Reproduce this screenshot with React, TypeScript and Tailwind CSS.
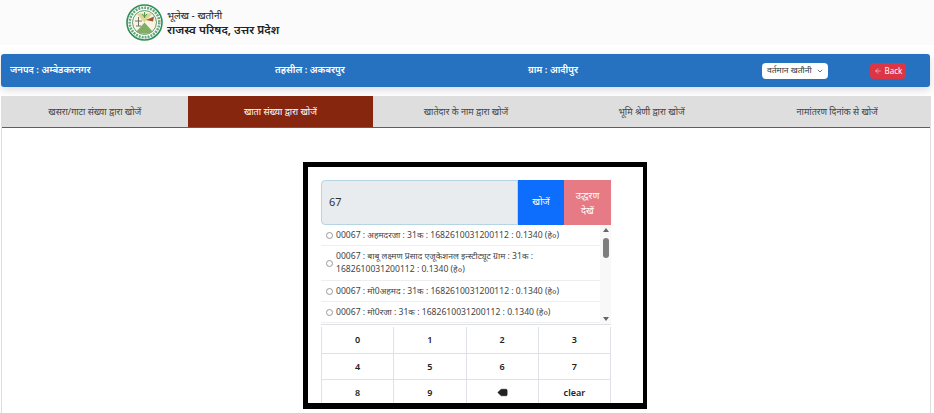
import { ArrowLeft, ChevronDown, Delete } from "lucide-react";

const font = { fontFamily: '"Noto Sans", "Open Sans", sans-serif' };

const tabs = [
  "खसरा/गाटा संख्या द्वारा खोजें",
  "खाता संख्या द्वारा खोजें",
  "खातेदार के नाम द्वारा खोजें",
  "भूमि श्रेणी द्वारा खोजें",
  "नामांतरण दिनांक से खोजें",
];

const results = [
  "00067 : अहमदरजा : 31क : 1682610031200112 : 0.1340 (हे०)",
  "00067 : बाबू लक्ष्मण प्रसाद एजूकेशनल इन्स्टीट्यूट ग्राम : 31क : 1682610031200112 : 0.1340 (हे०)",
  "00067 : मो0अहमद : 31क : 1682610031200112 : 0.1340 (हे०)",
  "00067 : मो0रजा : 31क : 1682610031200112 : 0.1340 (हे०)",
];

function Logo() {
  return (
    <svg width="37" height="37" viewBox="0 0 37 37">
      <circle cx="18.5" cy="18.5" r="17.5" fill="#fff" stroke="#2f8f57" strokeWidth="1.6" />
      <circle cx="18.5" cy="18.5" r="14.8" fill="none" stroke="#6aa87c" strokeWidth="2.6" strokeDasharray="2 1" />
      <circle cx="18.5" cy="18.5" r="12" fill="#f6f4e2" stroke="#3c7f52" strokeWidth="0.8" />
      <path d="M10.5 9.5 H26.5 L18.5 18.5 Z" fill="#dcd88e" />
      <path d="M10 28 Q18.5 31.5 27 28 L18.5 18.5 Z" fill="#7fae62" />
      <path d="M20 16 L28 12.5 L27 17.5 Z" fill="#a5532c" />
      <path d="M9 17 H16 M12.5 13 V22 M10 22 H15" stroke="#555" strokeWidth="0.8" />
      <path d="M18.5 8 V14 M16 10 L18.5 13 L21 10" stroke="#4d8f4f" strokeWidth="0.9" fill="none" />
    </svg>
  );
}

export default function App() {
  return (
    <div className="h-[413px] w-[934px] overflow-hidden bg-white" style={font}>
      {/* HEADER */}
      <div className="flex h-[45px] items-center gap-[4px] bg-[#fbfbfb] pl-[126px]">
        <Logo />
        <div className="text-[#222]">
          <div className="text-[10px] leading-[13px]">भूलेख - खतौनी</div>
          <div className="text-[11.7px] leading-[14px] font-semibold">राजस्व परिषद, उत्तर प्रदेश</div>
        </div>
      </div>

      {/* INFO BAR */}
      <div className="mx-px mt-[9px] grid h-[33px] w-[929px] grid-cols-[200px_260px_228px_1fr] items-center rounded-[3px] bg-[#2772c0] text-[9.5px] font-semibold text-white shadow-[0_3px_8px_rgba(0,0,0,0.15)]">
        <div className="pl-[9px]">जनपद : अम्बेडकरनगर</div>
        <div className="pl-[74px]">तहसील : अकबरपुर</div>
        <div className="pl-[67px]">ग्राम : आदीपुर</div>
        <div className="flex items-center pl-[73px]">
          <div className="flex h-4 w-[66px] items-center justify-between rounded-sm bg-white pr-[4px] pl-[5px] text-[8.5px] font-normal whitespace-nowrap text-[#333]">
            वर्तमान खतौनी
            <ChevronDown size={8} strokeWidth={2} />
          </div>
          <div className="ml-[42px] flex h-4 w-9 items-center justify-center gap-[3px] rounded-sm bg-[#dc3545] text-[8px] font-normal text-white">
            <ArrowLeft size={8} strokeWidth={1.5} />
            Back
          </div>
        </div>
      </div>

      {/* TABS */}
      <div className="mx-px mt-[9px] h-[400px] w-[930px] border-x border-[#dedede]">
        <div className="grid h-[32px] grid-cols-5 border-b border-[#a0452e] bg-[#dedede] text-[9px] text-[#444]">
          {tabs.map((t, i) => (
            <div
              key={t}
              className={
                i === 1
                  ? "flex items-center justify-center bg-[#86260f] text-white"
                  : "flex items-center justify-center"
              }
            >
              {t}
            </div>
          ))}
        </div>

        {/* SEARCH BOX */}
        <div className="mt-[34px] ml-[301px] h-[247px] w-[344px] overflow-hidden border-t-[5px] border-r-[4px] border-b-[6px] border-l-[5px] border-black bg-white pt-[13px] pl-[13px]">
          <div className="w-[290px]">
            <div className="flex h-[45px]">
              <div className="flex flex-1 items-center rounded-l-sm border border-[#b5d5e5] bg-[#e9ecef] pl-[7px] text-[11px] text-[#333]">
                67
              </div>
              <div className="flex w-[46px] items-center justify-center bg-[#0d6efd] text-[9.5px] text-white">
                खोजें
              </div>
              <div className="flex w-[47px] items-center justify-center bg-[#e67a85] text-center text-[9.5px] leading-[15px] text-white">
                उद्धरण
                <br />
                देखें
              </div>
            </div>

            {/* RESULT LIST */}
            <div className="relative h-[100px] overflow-hidden border-b border-[#dee2e6]">
              <div className="w-[279px] text-[8.6px] text-[#444]">
                {results.map((r, i) => (
                  <div
                    key={r}
                    className={
                      i === 1
                        ? "flex h-[35px] items-center gap-[3px] border-b border-[#eeeeee] pl-[5px]"
                        : "flex h-[21px] items-center gap-[3px] border-b border-[#eeeeee] pl-[5px]"
                    }
                  >
                    <span className="h-[7px] w-[7px] shrink-0 rounded-full border border-[#999]" />
                    <span className="leading-[13px]">{r}</span>
                  </div>
                ))}
              </div>
              <div className="absolute top-0 right-0 flex h-full w-[11px] flex-col items-center justify-between bg-[#f8f8f8] py-[3px]">
                <span className="h-0 w-0 border-x-[3px] border-b-[4px] border-x-transparent border-b-[#666]" />
                <span className="absolute top-[13px] h-5 w-[6px] rounded-full bg-[#7d7d7d]" />
                <span className="h-0 w-0 border-x-[3px] border-t-[4px] border-x-transparent border-t-[#666]" />
              </div>
            </div>

            {/* KEYPAD */}
            <div className="mt-[2px] grid grid-cols-4 border-l border-[#dee2e6] text-[9px] font-semibold text-[#222]">
              {["0", "1", "2", "3", "4", "5", "6", "7", "8", "9", "del", "clear"].map((k) => (
                <div
                  key={k}
                  className="flex h-[26.5px] items-center justify-center border-r border-b border-[#dee2e6]"
                >
                  {k === "del" ? <Delete size={11} fill="#222" strokeWidth={1.5} /> : k}
                </div>
              ))}
            </div>
          </div>
        </div>
      </div>
    </div>
  );
}
